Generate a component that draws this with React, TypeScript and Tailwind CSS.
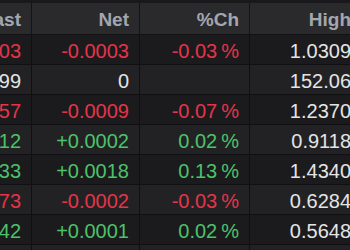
type Row = {
  last: string;
  net: string;
  pct: string;
  high: string;
  dir: "up" | "down" | "flat";
};

const rows: Row[] = [
  { last: "1.0303", net: "-0.0003", pct: "-0.03\u2009%", high: "1.0309", dir: "down" },
  { last: "151.99", net: "0", pct: "", high: "152.06", dir: "flat" },
  { last: "1.2357", net: "-0.0009", pct: "-0.07\u2009%", high: "1.2370", dir: "down" },
  { last: "0.9112", net: "+0.0002", pct: "0.02\u2009%", high: "0.9118", dir: "up" },
  { last: "1.4333", net: "+0.0018", pct: "0.13\u2009%", high: "1.4340", dir: "up" },
  { last: "0.6273", net: "-0.0002", pct: "-0.03\u2009%", high: "0.6284", dir: "down" },
  { last: "0.5642", net: "+0.0001", pct: "0.02\u2009%", high: "0.5648", dir: "up" },
  { last: "", net: "", pct: "", high: "", dir: "flat" },
];

const tone = {
  up: "text-[#4cc26a]",
  down: "text-[#e5344a]",
  flat: "text-[#e4e4e4]",
};

export default function App() {
  return (
    <div
      className="w-[350px] h-[250px] overflow-hidden bg-[#1b1b1d] text-[20px]"
      style={{ fontFamily: '"Liberation Sans", Arial, sans-serif' }}
    >
      <div className="h-[3px] bg-[#19191b]" />
      <div className="flex h-[32px] bg-[#2a2a2d] font-bold text-[19px] text-[#a3a6ad] border-b border-[#111113]">
        <div className="w-[32px] shrink-0 flex justify-end items-center pt-[3px] pr-[10px] whitespace-nowrap overflow-hidden border-r border-[#141416]">
          Last
        </div>
        <div className="w-[108px] shrink-0 flex justify-end items-center pt-[3px] pr-[10px] border-r border-[#141416]">
          Net
        </div>
        <div className="w-[110px] shrink-0 flex justify-end items-center pt-[3px] pr-[10px] border-r border-[#141416]">
          %Ch
        </div>
        <div className="w-[111px] shrink-0 flex justify-end items-center pt-[3px] pr-[10px]">
          High
        </div>
      </div>
      {rows.map((r, i) => (
        <div
          key={i}
          className={`flex h-[30px] border-b border-[#101012] ${
            i % 2 === 0 ? "bg-[#1b1b1d]" : "bg-[#222224]"
          }`}
        >
          <div
            className={`w-[32px] shrink-0 flex justify-end items-center pt-[3px] pr-[10px] whitespace-nowrap overflow-hidden border-r border-[#101012] ${tone[r.dir]}`}
          >
            {r.last}
          </div>
          <div
            className={`w-[108px] shrink-0 flex justify-end items-center pt-[3px] pr-[10px] whitespace-nowrap border-r border-[#101012] ${tone[r.dir]}`}
          >
            {r.net}
          </div>
          <div
            className={`w-[110px] shrink-0 flex justify-end items-center pt-[3px] pr-[10px] whitespace-nowrap border-r border-[#101012] ${tone[r.dir]}`}
          >
            {r.pct}
          </div>
          <div className="w-[111px] shrink-0 flex justify-end items-center pt-[3px] pr-[10px] whitespace-nowrap text-[#e4e4e4]">
            {r.high}
          </div>
        </div>
      ))}
    </div>
  );
}
